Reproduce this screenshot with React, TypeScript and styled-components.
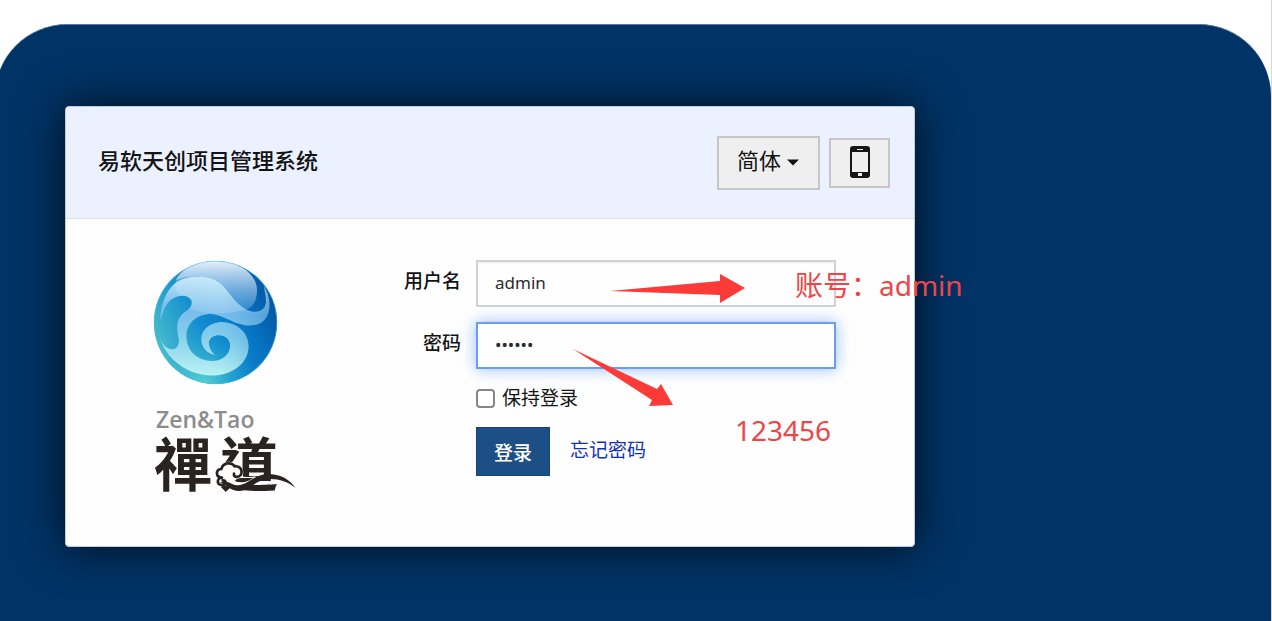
import React from 'react';
import styled, { createGlobalStyle } from 'styled-components';

const sans = `'Noto Sans', 'Noto Sans CJK SC', sans-serif`;

const GlobalStyle = createGlobalStyle`
  *, *::before, *::after { box-sizing: border-box; }
  body { margin: 0; background: #fff; font-family: ${sans}; color: #141414; }
  input, select, button { font-family: inherit; color: inherit; margin: 0; }
`;

const Page = styled.div`
  min-height: 100vh;
  padding-top: 24px;
  border-right: 1px solid #d4d6da;
  overflow: hidden;
  display: flex;
`;

const Backdrop = styled.main`
  flex: 1;
  margin-left: -5px;
  padding: 81px 70px 75px;
  border-top: 1px solid #54779a;
  border-radius: 72px 72px 0 0;
  background: #003366;
`;

const Card = styled.section`
  position: relative;
  max-width: 850px;
  min-height: 441px;
  border: 1px solid #c3ccd6;
  border-radius: 4px;
  background: #fefefe;
  box-shadow: 0 0 45px rgba(0, 0, 0, 0.75);
`;

const CardHeader = styled.header`
  display: flex;
  align-items: center;
  justify-content: space-between;
  min-height: 112px;
  padding: 0 24px 0 32px;
  border-bottom: 1px solid #dcdfe4;
  border-radius: 3px 3px 0 0;
  background: #ebf1ff;
`;

const Title = styled.h1`
  margin: 0;
  padding-bottom: 6px;
  font-size: 22px;
  line-height: 32px;
  font-weight: 500;
`;

const Actions = styled.div`
  display: flex;
  align-items: center;
  gap: 9px;
`;

const LanguagePicker = styled.div`
  position: relative;
`;

const LanguageSelect = styled.select`
  display: block;
  appearance: none;
  width: 103px;
  height: 54px;
  padding: 0 0 6px 18px;
  border: 2px solid #c6c6c6;
  border-radius: 0;
  background: #efefef;
  font-size: 22px;
`;

const Caret = styled.svg`
  position: absolute;
  right: 21px;
  top: 23px;
  pointer-events: none;
`;

const IconButton = styled.button`
  display: flex;
  align-items: center;
  justify-content: center;
  width: 61px;
  height: 50px;
  padding: 0 0 2px;
  border: 2px solid #c6c6c6;
  background: #efefef;
`;

const CardBody = styled.div`
  display: flex;
  justify-content: space-between;
  padding: 41px 78px 0 87px;
`;

const Brand = styled.div`
  width: 150px;
`;

const Globe = styled.svg`
  display: block;
`;

const BrandName = styled.div`
  margin: 18px 0 0 3px;
  color: #8c8c8c;
  font-family: 'Open Sans', sans-serif;
  font-size: 23px;
  font-weight: 600;
  line-height: 32px;
`;

const BrandMark = styled.div`
  position: relative;
  display: flex;
  gap: 8px;
  padding-left: 1px;
  color: #2b2222;
  font-family: 'Noto Sans CJK TC', sans-serif;
  font-size: 58px;
  font-weight: 700;
  line-height: 52px;
`;

const CloudTail = styled.svg`
  position: absolute;
  left: 59px;
  top: 24px;
`;

const Form = styled.form`
  display: grid;
  grid-template-columns: 58px 360px;
  column-gap: 15px;
  row-gap: 15px;
  align-content: start;
  font-size: 19px;
`;

const FieldLabel = styled.label`
  padding-top: 7px;
  line-height: 28px;
  font-weight: 500;
  text-align: right;
  white-space: nowrap;
`;

const TextField = styled.input<{ $active?: boolean }>`
  width: 100%;
  height: 47px;
  padding: 0 17px 2px;
  border: 2px solid ${p => (p.$active ? '#6c9df0' : '#d2d2d2')};
  border-radius: 0;
  outline: none;
  background: #fefefe;
  box-shadow: ${p => (p.$active ? '0 0 14px rgba(80, 145, 255, 0.6)' : 'inset 0 1px 2px rgba(0, 0, 0, 0.07)')};
  color: #2b2b2b;
  font-size: 17px;
`;

const FormLine = styled.div<{ $gap: number }>`
  grid-column: 2;
  display: flex;
  align-items: center;
  gap: ${p => p.$gap}px;
`;

const Checkbox = styled.input`
  appearance: none;
  width: 19px;
  height: 19px;
  border: 2px solid #858585;
  border-radius: 4px;
  background: #fff;
`;

const CheckLabel = styled.label`
  line-height: 28px;
`;

const SubmitButton = styled.button`
  width: 74px;
  height: 49px;
  padding: 0;
  border: 1px solid #164474;
  background: #1b4f85;
  && { color: #fff; }
  font-size: 19px;
  font-weight: 500;
`;

const ForgotLink = styled.a`
  padding-bottom: 6px;
  color: #1232b4;
  text-decoration: none;
`;

const Arrows = styled.svg`
  position: absolute;
  left: 534px;
  top: 160px;
  pointer-events: none;
`;

const Note = styled.span<{ $left: number; $top: number }>`
  position: absolute;
  left: ${p => p.$left}px;
  top: ${p => p.$top}px;
  color: #ee4548;
  font-size: 28px;
  line-height: 38px;
  white-space: nowrap;
`;

function GlobeLogo() {
  return (
    <Globe width="125" height="125" viewBox="40 32 370 370" aria-hidden="true">
      <defs>
        <linearGradient id="sphere" x1="0" y1="0.75" x2="1" y2="0.3">
          <stop offset="0" stopColor="#50c3cb" />
          <stop offset="0.42" stopColor="#108bd0" />
          <stop offset="0.72" stopColor="#0675c4" />
          <stop offset="1" stopColor="#06529e" />
        </linearGradient>
        <radialGradient id="glow" cx="0.4" cy="1" r="0.45">
          <stop offset="0" stopColor="#54d2d4" />
          <stop offset="1" stopColor="#28a9d2" stopOpacity="0" />
        </radialGradient>
        <linearGradient id="gloss" x1="0" y1="0" x2="0" y2="1">
          <stop offset="0" stopColor="#f4f6fc" stopOpacity="0.95" />
          <stop offset="0.6" stopColor="#a9cdf0" stopOpacity="0.65" />
          <stop offset="1" stopColor="#7db4e4" stopOpacity="0.4" />
        </linearGradient>
        <linearGradient id="wave" x1="0.5" y1="0" x2="0.4" y2="1">
          <stop offset="0" stopColor="#c4e8f8" />
          <stop offset="0.35" stopColor="#78bdeb" />
          <stop offset="0.6" stopColor="#84cdec" />
          <stop offset="1" stopColor="#b9f2f2" />
        </linearGradient>
        <linearGradient id="tail" x1="0" y1="0" x2="1" y2="0">
          <stop offset="0.55" stopColor="#fff" />
          <stop offset="1" stopColor="#a0a0a0" />
        </linearGradient>
        <mask id="fade">
          <rect x="40" y="32" width="370" height="370" fill="url(#tail)" />
        </mask>
        <clipPath id="ball">
          <circle cx="225" cy="217" r="183" />
        </clipPath>
      </defs>
      <g clipPath="url(#ball)">
        <circle cx="225" cy="217" r="183" fill="url(#sphere)" />
        <circle cx="225" cy="217" r="183" fill="url(#glow)" />
        <path
          mask="url(#fade)"
          fill="url(#wave)"
          d="M62 212C62 165 78 120 112 96C150 74 205 78 236 98C265 119 276 158 318 179C345 192 372 184 374 158C375 140 370 122 368 110C382 130 390 160 381 190C371 219 343 230 312 225C270 218 242 191 208 192C165 194 139 222 139 258C140 306 176 332 218 331C250 330 270 307 268 282C266 261 243 252 225 256C206 261 202 277 208 292C212 303 218 309 224 313C199 310 183 290 183 266C184 232 218 214 250 216C292 219 321 247 323 284C325 333 278 374 215 374C130 372 66 310 59 250C62 278 80 297 100 296C112 294 118 282 116 266C108 226 110 205 134 186C147 177 157 168 155 154C149 134 116 132 94 149C76 164 68 188 62 212Z"
        />
        <path
          d="M108 92C124 56 172 34 227 34C286 34 348 68 348 122C348 150 336 172 316 178C276 158 265 119 236 98C205 78 150 74 108 92Z"
          fill="url(#gloss)"
        />
        <path
          d="M108 92C150 74 205 78 236 98C265 119 276 158 316 178C270 196 190 192 150 176C160 150 146 138 122 138C106 126 102 108 108 92Z"
          fill="#e8f5ff"
          opacity="0.2"
        />
        <circle cx="225" cy="217" r="182" fill="none" stroke="#55bfdc" strokeOpacity="0.6" strokeWidth="4" />
      </g>
    </Globe>
  );
}

function CloudStroke() {
  return (
    <CloudTail width="84" height="38" viewBox="216 634 252 114" aria-hidden="true">
      <path
        d="M242 708C228 702 222 680 244 666C250 644 274 642 284 656C300 654 310 668 302 686C310 700 330 690 348 692C330 712 316 722 296 722C272 722 262 700 242 708Z"
        fill="#fefefe"
        stroke="#fefefe"
        strokeWidth="10"
      />
      <path
        d="M246 690C226 688 226 666 244 664C250 644 274 642 284 656C300 654 310 668 302 682C294 692 280 688 282 678M246 690C228 692 230 714 248 712C260 710 258 696 248 698"
        fill="none"
        stroke="#2b2222"
        strokeWidth="8"
        strokeLinecap="round"
      />
      <path
        d="M240 706C258 690 272 714 296 713C326 710 340 682 382 679C422 679 446 694 466 720C440 700 414 692 384 694C346 697 330 728 298 730C268 730 260 708 240 706Z"
        fill="#2b2222"
      />
      <path d="M284 700C296 686 312 694 340 690C326 702 304 708 284 700Z" fill="#2b2222" />
    </CloudTail>
  );
}

export default function App() {
  return (
    <>
      <GlobalStyle />
      <Page>
        <Backdrop>
          <Card>
            <CardHeader>
              <Title>易软天创项目管理系统</Title>
              <Actions>
                <LanguagePicker>
                  <LanguageSelect aria-label="语言" defaultValue="zh-cn">
                    <option value="zh-cn">简体</option>
                  </LanguageSelect>
                  <Caret width="12" height="7" viewBox="0 0 12 7" aria-hidden="true">
                    <path d="M0 0.5H12L6 6.5Z" fill="#141414" />
                  </Caret>
                </LanguagePicker>
                <IconButton type="button" aria-label="手机访问">
                  <svg width="20" height="32" viewBox="0 0 20 32" aria-hidden="true">
                    <path
                      fillRule="evenodd"
                      fill="#161616"
                      d="M3 0H17Q20 0 20 3V29Q20 32 17 32H3Q0 32 0 29V3Q0 0 3 0ZM2 6V26H18V6ZM7 3V4H13V3ZM8 27V30H12V27Z"
                    />
                  </svg>
                </IconButton>
              </Actions>
            </CardHeader>
            <CardBody>
              <Brand>
                <GlobeLogo />
                <BrandName>Zen&amp;Tao</BrandName>
                <BrandMark>
                  <span>禪</span>
                  <span>道</span>
                  <CloudStroke />
                </BrandMark>
              </Brand>
              <Form onSubmit={e => e.preventDefault()}>
                <FieldLabel htmlFor="account">用户名</FieldLabel>
                <TextField id="account" type="text" defaultValue="admin" />
                <FieldLabel htmlFor="password">密码</FieldLabel>
                <TextField id="password" type="password" defaultValue="123456" $active />
                <FormLine $gap={7}>
                  <Checkbox id="keep" type="checkbox" />
                  <CheckLabel htmlFor="keep">保持登录</CheckLabel>
                </FormLine>
                <FormLine $gap={20}>
                  <SubmitButton type="submit">登录</SubmitButton>
                  <ForgotLink href="#forgot">忘记密码</ForgotLink>
                </FormLine>
              </Form>
            </CardBody>
            <Arrows width="160" height="150" viewBox="600 267 160 150" overflow="visible" aria-hidden="true">
              <path d="M610 291L720 281V274L745 288L720 303V295Z" fill="#fc3a38" />
              <path d="M573 349L657 389L661 384L673 405L649 406L652 400Z" fill="#fc3a38" />
            </Arrows>
            <Note $left={729} $top={159}>账号：admin</Note>
            <Note $left={669} $top={304}>123456</Note>
          </Card>
        </Backdrop>
      </Page>
    </>
  );
}
